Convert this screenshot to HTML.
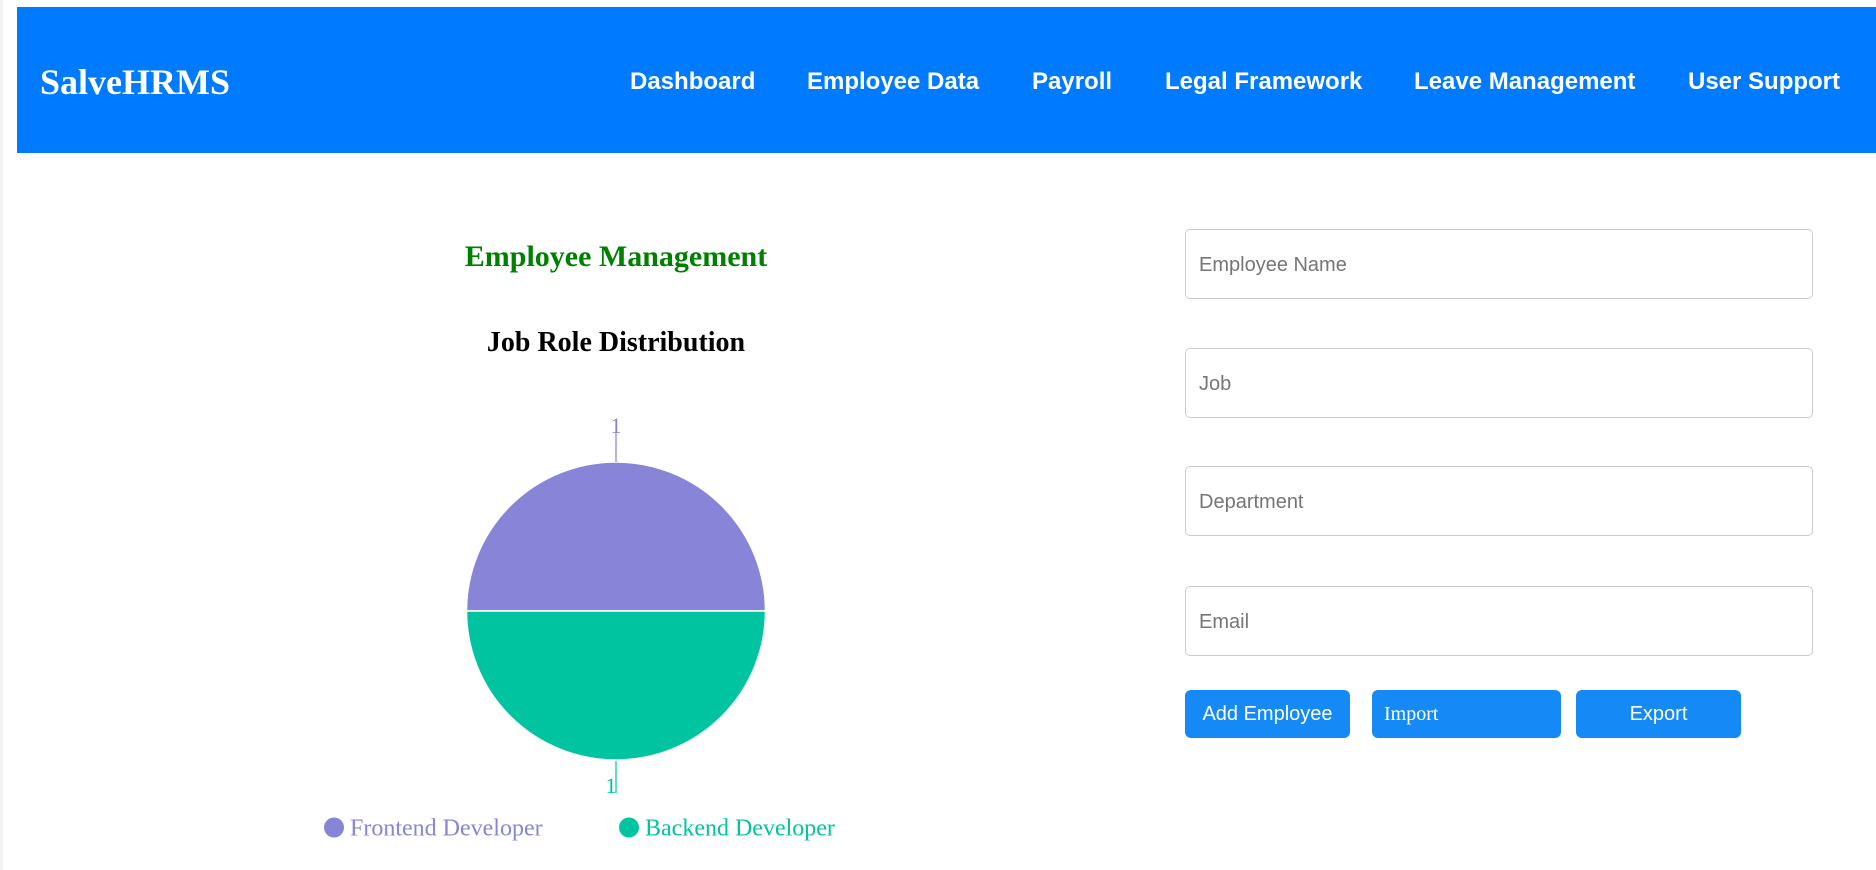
<!DOCTYPE html>
<html><head><meta charset="utf-8"><style>
*{margin:0;padding:0;box-sizing:border-box}
body{width:1876px;height:870px;background:#fff;position:relative;overflow:hidden;font-family:"Liberation Sans",Arial,sans-serif}
.edge{position:absolute;left:0;top:0;width:3px;height:870px;background:#f2f2f2}
.hdr{position:absolute;left:17px;top:7px;right:0;height:146px;background:#007bff}
.logo{position:absolute;left:40px;top:82px;transform:translateY(-50%);font:bold 36px "Liberation Serif",serif;color:#fff}
.nav{position:absolute;top:82px;transform:translateY(-50%);font:bold 24px "Liberation Sans",sans-serif;color:#fff;white-space:nowrap}
.t{position:absolute;left:616px;transform:translate(-50%,-50%);font-family:"Liberation Serif",serif;font-weight:bold;white-space:nowrap}
.in{position:absolute;left:1185px;width:628px;height:70px;border:1px solid #ccc;border-radius:5px;font-size:20px;color:#757575;padding-left:13px;line-height:70px}
.btn{position:absolute;top:690px;height:48px;background:#1589f5;border-radius:6px;color:#fff;font-size:20px;line-height:49px;text-align:center}
.leg{position:absolute;top:829px;transform:translateY(-50%);font:24px "Liberation Serif",serif;white-space:nowrap}
.dot{display:inline-block;width:20px;height:20px;border-radius:50%;vertical-align:-2px;margin-right:6px}
</style></head><body>
<div class="edge"></div>
<div class="hdr"></div>
<div class="logo">SalveHRMS</div>
<div class="nav" style="left:630px">Dashboard</div>
<div class="nav" style="left:807px">Employee Data</div>
<div class="nav" style="left:1032px">Payroll</div>
<div class="nav" style="left:1165px">Legal Framework</div>
<div class="nav" style="left:1414px">Leave Management</div>
<div class="nav" style="left:1688px">User Support</div>

<div class="t" style="top:257px;font-size:30px;color:#008000">Employee Management</div>
<div class="t" style="top:343px;font-size:28px;color:#000">Job Role Distribution</div>

<svg style="position:absolute;left:0;top:0" width="1876" height="870">
<path d="M466.5 611 A149.5 149 0 0 1 765.5 611 Z" fill="#8884d8" stroke="#fff" stroke-width="1.5"/>
<path d="M466.5 611 A149.5 149 0 0 0 765.5 611 Z" fill="#00c49f" stroke="#fff" stroke-width="1.5"/>
<line x1="616" y1="430" x2="616" y2="462" stroke="#8884d8" stroke-width="1.2"/>
<line x1="616" y1="761" x2="616" y2="793" stroke="#00c49f" stroke-width="1.2"/>
<text x="616" y="433" text-anchor="middle" font-family="Liberation Serif" font-size="22" fill="#8884d8">1</text>
<text x="611" y="793" text-anchor="middle" font-family="Liberation Serif" font-size="22" fill="#00c49f">1</text>
</svg>
<div class="leg" style="left:324px;color:#8884d8"><span class="dot" style="background:#8884d8"></span>Frontend Developer</div>
<div class="leg" style="left:619px;color:#00c49f"><span class="dot" style="background:#00c49f"></span>Backend Developer</div>

<div class="in" style="top:229px">Employee Name</div>
<div class="in" style="top:348px">Job</div>
<div class="in" style="top:466px">Department</div>
<div class="in" style="top:586px">Email</div>
<div class="btn" style="left:1185px;width:165px">Add Employee</div>
<div class="btn" style="left:1372px;width:189px;text-align:left;padding-left:12px;font-family:'Liberation Serif',serif">Import</div>
<div class="btn" style="left:1576px;width:165px">Export</div>
</body></html>
